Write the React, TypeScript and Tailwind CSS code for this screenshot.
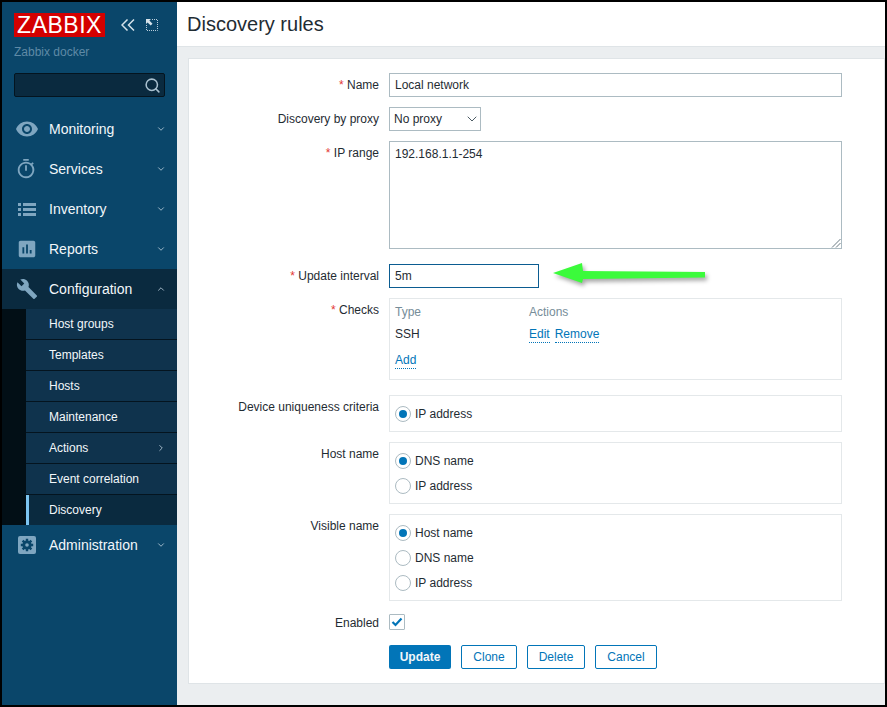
import React from "react";
import { MdVisibility, MdOutlineTimer, MdAssessment, MdBuild } from "react-icons/md";
import { ChevronDown, ChevronUp, ChevronRight, Search } from "lucide-react";

const ListIcon = () => (
  <svg width="18" height="13" viewBox="0 0 18 13" fill="#7fa6c0">
    <rect x="0" y="0" width="3" height="3" />
    <rect x="0" y="5" width="3" height="3" />
    <rect x="0" y="10" width="3" height="3" />
    <rect x="5" y="0" width="13" height="3" />
    <rect x="5" y="5" width="13" height="3" />
    <rect x="5" y="10" width="13" height="3" />
  </svg>
);

const AdminIcon = () => (
  <svg width="18" height="18" viewBox="0 0 18 18">
    <rect width="18" height="18" rx="2" fill="#7fa6c0" />
    <circle cx="9" cy="9" r="4.6" fill="#0a466a" />
    <path
      d="M9 2.800v3M9 12.200v3M2.800 9h3M12.200 9h3M4.600 4.600l2.100 2.100M11.300 11.300l2.100 2.100M13.400 4.600l-2.100 2.100M6.700 11.300l-2.100 2.100"
      stroke="#0a466a"
      strokeWidth="2.400"
    />
    <circle cx="9" cy="9" r="1.800" fill="#7fa6c0" />
  </svg>
);

const CollapseIcon = () => (
  <svg width="14" height="12" viewBox="0 0 14 12" fill="none" stroke="#d5e2ea" strokeWidth="1.500">
    <path d="M6.500 .5 1 6l5.500 5.500M13 .5 7.500 6l5.500 5.500" />
  </svg>
);

const ExpandIcon = () => (
  <svg width="12" height="12" viewBox="0 0 12 12" fill="none">
    <path d="M6 .5h5.500v11H.5V6" stroke="#b9cddb" strokeDasharray="1 1" />
    <path d="M0 0h5L3.400 1.600 6.500 4.700 4.700 6.500 1.600 3.400 0 5z" fill="#d5e2ea" />
  </svg>
);

const mainNav = [
  { label: "Monitoring", icon: <MdVisibility size={24} color="#7fa6c0" /> },
  { label: "Services", icon: <MdOutlineTimer size={22} color="#7fa6c0" className="-ml-[2px]" /> },
  { label: "Inventory", icon: <ListIcon /> },
  { label: "Reports", icon: <MdAssessment size={22} color="#7fa6c0" /> },
];

const subNav = ["Host groups", "Templates", "Hosts", "Maintenance", "Actions", "Event correlation"];

const NavItem = ({ label, icon, open }: { label: string; icon: React.ReactNode; open?: boolean }) => (
  <div className={`flex h-10 items-center text-sm ${open ? "bg-[#0a2a3f]" : ""}`}>
    <div className="flex w-[47px] justify-center pl-[2px]">{icon}</div>
    <span className="text-[#f2f7fa]">{label}</span>
    <span className="ml-auto mr-[11px]">
      {open ? (
        <ChevronUp size={10} color="#b9cddb" strokeWidth={2} />
      ) : (
        <ChevronDown size={10} color="#b9cddb" strokeWidth={2} />
      )}
    </span>
  </div>
);

const Sidebar = () => (
  <aside className="flex w-[175px] shrink-0 flex-col bg-[#0a466a]">
    <div className="flex items-center pl-3 pt-[11px]">
      <div className="flex h-6 w-[91px] items-center justify-center bg-[#d40000] text-[23px] tracking-[0.5px] text-white">
        ZABBIX
      </div>
      <span className="ml-[16px]">
        <CollapseIcon />
      </span>
      <span className="ml-[11px]">
        <ExpandIcon />
      </span>
    </div>
    <div className="mt-[7px] pl-3 text-xs leading-[16px] text-[#5f8aa6]">Zabbix docker</div>
    <div className="mx-3 mt-[13px] flex h-6 w-[151px] items-center justify-end rounded-[2px] border border-[#04141f] bg-[#0a2a3f] pr-[3px]">
      <Search size={17} color="#a9c0cf" strokeWidth={2.200} />
    </div>
    <nav className="mt-3">
      {mainNav.map((n) => (
        <NavItem key={n.label} label={n.label} icon={n.icon} />
      ))}
      <NavItem label="Configuration" icon={<MdBuild size={22} color="#7fa6c0" />} open />
      <div className="bg-[#020f16] pl-6">
        {subNav.map((s) => (
          <div
            key={s}
            className="flex h-[31px] items-center border-b border-[#04141f] bg-[#0f334d] pl-[23px] text-xs font-medium text-[#f2f7fa]"
          >
            <span>{s}</span>
            {s === "Actions" && <ChevronRight size={10} color="#b9cddb" className="ml-auto mr-[11px]" />}
          </div>
        ))}
        <div className="flex h-[30px] items-center border-l-[3px] border-[#7cc4f0] bg-[#0a2a3f] pl-5 text-xs font-medium text-[#f2f7fa]">
          Discovery
        </div>
      </div>
      <NavItem label="Administration" icon={<AdminIcon />} />
    </nav>
  </aside>
);

const Row = ({
  label,
  required,
  className,
  labelClass,
  children,
}: {
  label: string;
  required?: boolean;
  className?: string;
  labelClass?: string;
  children: React.ReactNode;
}) => (
  <div className={`flex ${className ?? ""}`}>
    <label className={`w-[190px] shrink-0 text-right leading-[16px] text-[#1f2c33] ${labelClass ?? "pt-[4px]"}`}>
      {required && <span className="text-[#e33734]">* </span>}
      {label}
    </label>
    <div className="ml-[10px] min-w-0">{children}</div>
  </div>
);

const Radio = ({ label, checked }: { label: string; checked?: boolean }) => (
  <div className="flex h-[25px] items-center">
    <span className="flex size-4 items-center justify-center rounded-full border border-[#acbbc2] bg-white">
      {checked && <span className="size-2 rounded-full bg-[#0275b8]" />}
    </span>
    <span className="ml-[4px] text-[#1f2c33]">{label}</span>
  </div>
);

const RadioBox = ({ children }: { children: React.ReactNode }) => (
  <div className="w-[453px] border border-[#e4e8ea] px-[5px] py-[5px]">{children}</div>
);

const Btn = ({ label, w }: { label: string; w: string }) => (
  <button className={`h-6 rounded-[2px] border border-[#0275b8] bg-white text-[#0275b8] ${w}`}>{label}</button>
);

const GreenArrow = () => (
  <svg
    width="160"
    height="30"
    viewBox="0 0 160 30"
    className="absolute left-[363px] top-[-3px] drop-shadow-[2px_3px_2px_rgba(0,0,0,0.35)]"
  >
    <path d="M1 12 30 2 31 10 153 11 153 16.500 31 18 30 22z" fill="#3bfb3b" />
  </svg>
);

export default function App() {
  return (
    <div className="flex h-[707px] w-[887px] overflow-hidden border-2 border-black bg-[#ebeef0] font-['Liberation_Sans',Arial,sans-serif] text-xs">
      <Sidebar />
      <main className="min-w-0 flex-1">
        <header className="flex h-[45px] items-center border-b border-[#dfe4e7] bg-white pl-[10px]">
          <h1 className="text-xl text-[#1f2c33]">Discovery rules</h1>
        </header>
        <div className="ml-[11px] mt-[11px] h-[626px] border border-[#dfe4e7] bg-white pt-[14px]">
          <Row label="Name" required>
            <div className="flex h-6 w-[453px] items-center border border-[#acbbc2] px-[5px] text-[#1f2c33]">Local network</div>
          </Row>
          <Row label="Discovery by proxy" className="mt-[10px]">
            <div className="flex h-6 w-[92px] items-center justify-between border border-[#acbbc2] pl-1 text-[#1f2c33]">
              No proxy
              <ChevronDown size={16} color="#4c5b64" strokeWidth={1.500} />
            </div>
          </Row>
          <Row label="IP range" required className="mt-[10px]">
            <div className="relative h-[108px] w-[453px] border border-[#acbbc2] px-[5px] pt-[4px] leading-[16px] text-[#1f2c33]">
              192.168.1.1-254
              <svg width="10" height="10" viewBox="0 0 10 10" className="absolute bottom-0 right-0" stroke="#6b7a82">
                <path d="M9.500 1 1 9.500M9.500 5 5 9.500" />
              </svg>
            </div>
          </Row>
          <Row label="Update interval" required className="relative mt-[15px]">
            <div className="flex h-6 w-[150px] items-center border border-[#0b5c91] px-[5px] text-[#1f2c33]">5m</div>
            <GreenArrow />
          </Row>
          <Row label="Checks" required className="mt-[10px]">
            <div className="h-[82px] w-[453px] border border-[#e4e8ea] px-[5px] pt-[5px]">
              <div className="flex h-4 items-center text-[#768d99]">
                <span className="w-[134px]">Type</span>
                <span>Actions</span>
              </div>
              <div className="mt-[6px] flex h-4 items-center text-[#1f2c33]">
                <span className="w-[134px]">SSH</span>
                <a className="border-b border-dotted border-[#0275b8] text-[#0275b8]">Edit</a>
                <a className="ml-[5px] border-b border-dotted border-[#0275b8] text-[#0275b8]">Remove</a>
              </div>
              <div className="mt-[10px] flex h-4 items-center">
                <a className="border-b border-dotted border-[#0275b8] text-[#0275b8]">Add</a>
              </div>
            </div>
          </Row>
          <Row label="Device uniqueness criteria" className="mt-[15px]">
            <RadioBox>
              <Radio label="IP address" checked />
            </RadioBox>
          </Row>
          <Row label="Host name" className="mt-[10px]">
            <RadioBox>
              <Radio label="DNS name" checked />
              <Radio label="IP address" />
            </RadioBox>
          </Row>
          <Row label="Visible name" className="mt-[10px]">
            <RadioBox>
              <Radio label="Host name" checked />
              <Radio label="DNS name" />
              <Radio label="IP address" />
            </RadioBox>
          </Row>
          <Row label="Enabled" labelClass="pt-[1px]" className="mt-[13px]">
            <div className="flex size-4 items-center justify-center rounded-[1px] border border-[#acbbc2]">
              <svg width="12" height="10" viewBox="0 0 12 10" fill="none" stroke="#0275b8" strokeWidth="2.200">
                <path d="M1.500 5 4.500 8 10.500 1.500" />
              </svg>
            </div>
          </Row>
          <div className="ml-[200px] mt-[14px] flex gap-[10px]">
            <button className="h-6 w-[62px] rounded-[2px] bg-[#0275b8] font-bold text-[#f2f7fa]">Update</button>
            <Btn label="Clone" w="w-[56px]" />
            <Btn label="Delete" w="w-[58px]" />
            <Btn label="Cancel" w="w-[62px]" />
          </div>
        </div>
      </main>
    </div>
  );
}
